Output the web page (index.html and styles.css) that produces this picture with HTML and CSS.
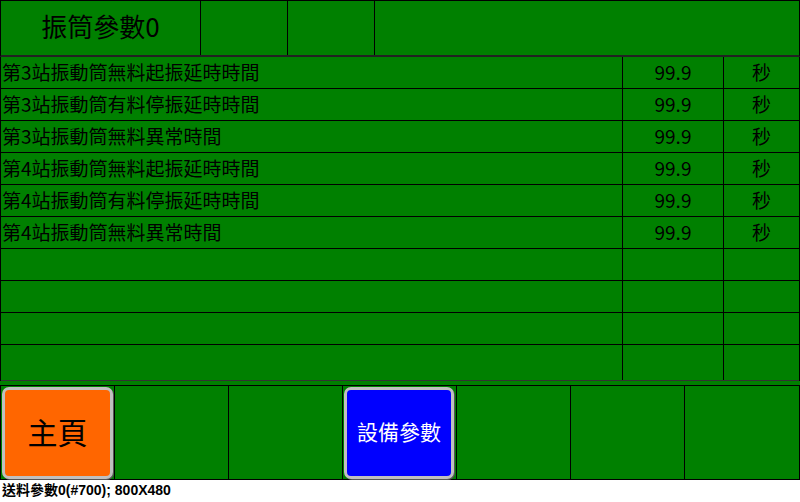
FILE: index.html
```html
<!DOCTYPE html>
<html lang="zh-Hant">
<head>
    <meta charset="UTF-8">
    <title>振筒參數0</title>
    <link rel="stylesheet" href="styles.css">
</head>
<body>
    <div class="screen">
        <div class="header">
            <div class="header-cell title">振筒參數0</div>
            <div class="header-cell"></div>
            <div class="header-cell"></div>
            <div class="header-cell"></div>
        </div>

        <div class="params">
            <div class="row"><div class="label">第3站振動筒無料起振延時時間</div><div class="value">99.9</div><div class="unit">秒</div></div>
            <div class="row"><div class="label">第3站振動筒有料停振延時時間</div><div class="value">99.9</div><div class="unit">秒</div></div>
            <div class="row"><div class="label">第3站振動筒無料異常時間</div><div class="value">99.9</div><div class="unit">秒</div></div>
            <div class="row"><div class="label">第4站振動筒無料起振延時時間</div><div class="value">99.9</div><div class="unit">秒</div></div>
            <div class="row"><div class="label">第4站振動筒有料停振延時時間</div><div class="value">99.9</div><div class="unit">秒</div></div>
            <div class="row"><div class="label">第4站振動筒無料異常時間</div><div class="value">99.9</div><div class="unit">秒</div></div>
            <div class="row"><div class="label"></div><div class="value"></div><div class="unit"></div></div>
            <div class="row"><div class="label"></div><div class="value"></div><div class="unit"></div></div>
            <div class="row"><div class="label"></div><div class="value"></div><div class="unit"></div></div>
            <div class="row last"><div class="label"></div><div class="value"></div><div class="unit"></div></div>
        </div>

        <div class="nav">
            <div class="nav-cell"><button class="nav-btn home">主頁</button></div>
            <div class="nav-cell"></div>
            <div class="nav-cell"></div>
            <div class="nav-cell"><button class="nav-btn device">設備參數</button></div>
            <div class="nav-cell"></div>
            <div class="nav-cell"></div>
            <div class="nav-cell"></div>
        </div>
    </div>
    <div class="status">送料參數0(#700); 800X480</div>
</body>
</html>
```

FILE: styles.css
```css
body {
    margin: 0;
    background: #fff;
    font-family: "Noto Sans CJK TC", "Liberation Sans", sans-serif;
    color: #000;
}

.screen {
    width: 800px;
    height: 480px;
    background: #008000;
    display: flex;
    flex-direction: column;
}

.header {
    height: 57px;
    box-sizing: border-box;
    display: grid;
    grid-template-columns: 200px 87px 87px 1fr;
    border: 1px solid #000;
    border-bottom: 2px solid #222;
}

.header-cell {
    border-right: 1px solid #000;
}

.header-cell:last-child {
    border-right: none;
}

.title {
    display: flex;
    align-items: center;
    justify-content: center;
    padding-bottom: 5px;
    font-size: 26px;
    line-height: 1;
}

.params {
    height: 324px;
    display: grid;
    grid-template-rows: repeat(9, 32px) 1fr;
    border-left: 1px solid #000;
    border-right: 1px solid #000;
}

.row {
    display: grid;
    grid-template-columns: 622px 101px 1fr;
    border-bottom: 1px solid #000;
    font-size: 19px;
    line-height: 1;
}

.row.last {
    border-bottom-color: #333;
}

.label,
.value,
.unit {
    display: flex;
    align-items: center;
    padding-bottom: 3px;
}

.label {
    padding-left: 1px;
    border-right: 1px solid #000;
    white-space: nowrap;
}

.value {
    justify-content: center;
    border-right: 1px solid #000;
}

.unit {
    justify-content: center;
}

.nav {
    margin-top: 4px;
    height: 95px;
    box-sizing: border-box;
    display: grid;
    grid-template-columns: repeat(6, 114px) 1fr;
    border: 1px solid #000;
}

.nav-cell {
    border-right: 1px solid #000;
    display: flex;
}

.nav-cell:last-child {
    border-right: none;
}

.nav-btn {
    flex: 1;
    margin: 1px 1px 0 1px;
    border: 3px solid #c0c0c0;
    border-radius: 7px;
    box-shadow: 1px 1px 0 #555;
    font-family: "Noto Sans CJK TC", sans-serif;
    line-height: 1;
    padding: 0 0 4px;
    cursor: pointer;
}

.home {
    background: #ff6600;
    color: #000;
    font-size: 30px;
}

.device {
    margin-right: 2px;
    background: #0000ff;
    color: #fff;
    font-size: 21px;
}

.status {
    padding: 2px 0 0 2px;
    font-family: "Liberation Sans", "Noto Sans CJK TC", sans-serif;
    font-weight: bold;
    font-size: 14px;
    line-height: 16px;
}
```
